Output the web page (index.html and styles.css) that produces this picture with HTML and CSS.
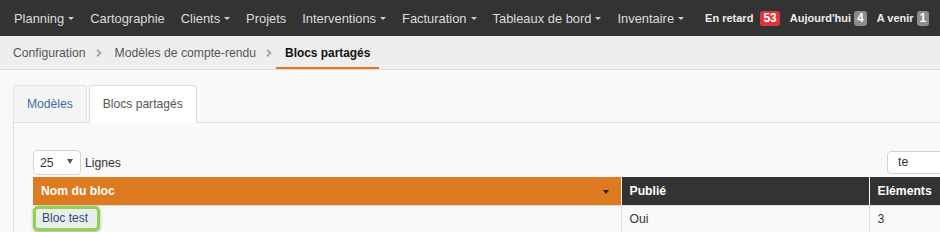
FILE: index.html
```html
<!DOCTYPE html>
<html lang="fr">
<head>
<meta charset="utf-8">
<title>Blocs partagés</title>
<link rel="stylesheet" href="styles.css">
</head>
<body>
<nav class="topbar">
  <ul class="menu">
    <li class="menu-item">Planning<span class="caret"></span></li>
    <li class="menu-item">Cartographie</li>
    <li class="menu-item">Clients<span class="caret"></span></li>
    <li class="menu-item">Projets</li>
    <li class="menu-item">Interventions<span class="caret"></span></li>
    <li class="menu-item">Facturation<span class="caret"></span></li>
    <li class="menu-item">Tableaux de bord<span class="caret"></span></li>
    <li class="menu-item">Inventaire<span class="caret"></span></li>
  </ul>
  <div class="counters">
    <span class="counter">En retard<span class="badge badge-red badge-wide">53</span></span>
    <span class="counter">Aujourd'hui<span class="badge">4</span></span>
    <span class="counter">A venir<span class="badge">1</span></span>
  </div>
</nav>

<div class="crumbs">
  <span class="crumb">Configuration</span>
  <svg class="sep" width="6" height="8" viewBox="0 0 6 8"><path d="M1 0.8 L4.4 4 L1 7.2" fill="none" stroke="#a9a9a9" stroke-width="2"/></svg>
  <span class="crumb">Modèles de compte-rendu</span>
  <svg class="sep" width="6" height="8" viewBox="0 0 6 8"><path d="M1 0.8 L4.4 4 L1 7.2" fill="none" stroke="#a9a9a9" stroke-width="2"/></svg>
  <span class="crumb crumb-active">Blocs partagés</span>
</div>

<main class="page">
  <ul class="tabs">
    <li class="tab">Modèles</li>
    <li class="tab tab-active">Blocs partagés</li>
  </ul>
  <section class="panel">
    <div class="toolbar">
      <div class="length">
        <div class="select"><span>25</span><span class="arrow"></span></div>
        <span class="length-label">Lignes</span>
      </div>
      <div class="search">te</div>
    </div>
    <table class="grid">
      <thead>
        <tr>
          <th class="col-name sorted"><span>Nom du bloc</span><span class="sort-caret"></span></th>
          <th class="col-pub">Publié</th>
          <th class="col-el">Eléments</th>
        </tr>
      </thead>
      <tbody>
        <tr>
          <td class="col-name"><span class="link-focus">Bloc test</span></td>
          <td class="col-pub">Oui</td>
          <td class="col-el">3</td>
        </tr>
      </tbody>
    </table>
  </section>
</main>
</body>
</html>
```

FILE: styles.css
```css
html, body {
  margin: 0;
  padding: 0;
  overflow: hidden;
}

body {
  width: 940px;
  height: 232px;
  background: #f9f9f9;
  font-family: "Liberation Sans", Arial, sans-serif;
  color: #333;
}

/* ---------- top bar ---------- */
.topbar {
  height: 36px;
  background: #333;
  display: flex;
  align-items: center;
  padding-left: 6px;
  white-space: nowrap;
  overflow: hidden;
}

.menu {
  list-style: none;
  margin: 0;
  padding: 0;
  display: flex;
  align-items: center;
}

.menu-item {
  font-size: 12.9px;
  color: #dcdcdc;
  padding: 0 8px;
  display: flex;
  align-items: center;
}

.caret {
  display: inline-block;
  width: 0;
  height: 0;
  margin-left: 4px;
  margin-top: 1px;
  border-top: 3px solid #cfcfcf;
  border-left: 3px solid transparent;
  border-right: 3px solid transparent;
}

.counters {
  display: flex;
  align-items: center;
  margin-left: 13px;
}

.counter {
  font-size: 11px;
  font-weight: bold;
  color: #eee;
  display: flex;
  align-items: center;
  margin-right: 10px;
}

.badge {
  display: inline-block;
  margin-left: 3px;
  padding: 0 3px;
  height: 15px;
  line-height: 15px;
  font-size: 12px;
  font-weight: bold;
  color: #fff;
  background: #8c8c8c;
  border-radius: 3px;
}

.badge-wide {
  margin-left: 7px;
}

.badge-red {
  background: #e2343c;
}

/* ---------- breadcrumb ---------- */
.crumbs {
  height: 33px;
  background: #eee;
  border-bottom: 1px solid #dcdcdc;
  display: flex;
  align-items: stretch;
  padding-left: 4px;
  white-space: nowrap;
}

.crumb {
  font-size: 12.2px;
  color: #555;
  padding: 0 9px;
  display: flex;
  align-items: center;
  box-sizing: border-box;
}

.crumb-active {
  color: #111;
  font-weight: bold;
  font-size: 11.9px;
  border-bottom: 2px solid #de7a22;
  padding-top: 2px;
}

.sep {
  align-self: center;
  margin: 1px 4px 0 1px;
}

/* ---------- tabs ---------- */
.page {
  width: 1100px;
  padding-top: 15px;
  padding-left: 13px;
}

.tabs {
  list-style: none;
  margin: 0;
  padding: 0;
  display: flex;
  border-bottom: 1px solid #ddd;
}

.tab {
  font-size: 12.1px;
  line-height: 17px;
  padding: 10px 13px 9px;
  margin-right: 2px;
  margin-bottom: -1px;
  color: #3a6e9e;
  background: #f5f5f5;
  border: 1px solid #e2e2e2;
  border-bottom-color: #ddd;
  border-radius: 4px 4px 0 0;
}

.tab-active {
  color: #555;
  background: #fff;
  border-color: #ddd;
  border-bottom-color: #fff;
}

/* ---------- panel ---------- */
.panel {
  border-left: 1px solid #ddd;
  padding: 27px 0 0 19px;
  height: 120px;
}

.toolbar {
  width: 1000px;
  display: flex;
  justify-content: space-between;
  align-items: flex-start;
}

.length {
  display: flex;
  align-items: center;
}

.select {
  width: 48px;
  height: 25px;
  box-sizing: border-box;
  border: 1px solid #d2d2d2;
  border-radius: 4px;
  background: #fff;
  display: flex;
  align-items: center;
  justify-content: space-between;
  padding: 0 7px 0 6px;
  font-size: 12.2px;
  color: #333;
}

.arrow {
  width: 0;
  height: 0;
  border-top: 5px solid #555;
  border-left: 3px solid transparent;
  border-right: 3px solid transparent;
  margin-top: -2px;
}

.length-label {
  font-size: 12.2px;
  margin-left: 4px;
  color: #333;
}

.search {
  width: 146px;
  height: 23px;
  box-sizing: border-box;
  margin-top: 1px;
  border: 1px solid #d2d2d2;
  border-radius: 4px;
  background: #fff;
  padding-left: 10px;
  font-size: 12.2px;
  line-height: 21px;
  color: #333;
}

/* ---------- table ---------- */
.grid {
  width: 1000px;
  margin-top: 2px;
  border-collapse: collapse;
  table-layout: fixed;
}

.grid th {
  height: 28px;
  padding: 0 8px;
  text-align: left;
  font-size: 12.2px;
  font-weight: bold;
  color: #fff;
  background: #333;
  border-left: 1px solid #fff;
  box-sizing: border-box;
}

.grid th:first-child {
  border-left: none;
}

.grid th.sorted {
  background: #de7a1f;
  position: relative;
}

.sort-caret {
  position: absolute;
  right: 12px;
  top: 13px;
  width: 0;
  height: 0;
  border-top: 4px solid #222;
  border-left: 3.5px solid transparent;
  border-right: 3.5px solid transparent;
}

.col-name { width: 588px; }
.col-pub { width: 248px; }
.col-el { width: 164px; }

.grid td {
  height: 27px;
  padding: 0 8px;
  font-size: 12.2px;
  color: #333;
  border-top: 1px solid #ddd;
  border-left: 1px solid #ddd;
  vertical-align: middle;
}

.grid td:first-child {
  border-left: none;
  padding: 0;
  vertical-align: top;
  line-height: 0;
}

.link-focus {
  display: inline-block;
  vertical-align: top;
  height: 19px;
  line-height: 19px;
  padding: 0 9px 0 6px;
  font-size: 12px;
  color: #2b4d72;
  background: #ececec;
  border: 3px solid #8fd24e;
  border-radius: 5px;
  box-shadow: 0 1px 3px rgba(0, 0, 0, 0.35);
}
```
